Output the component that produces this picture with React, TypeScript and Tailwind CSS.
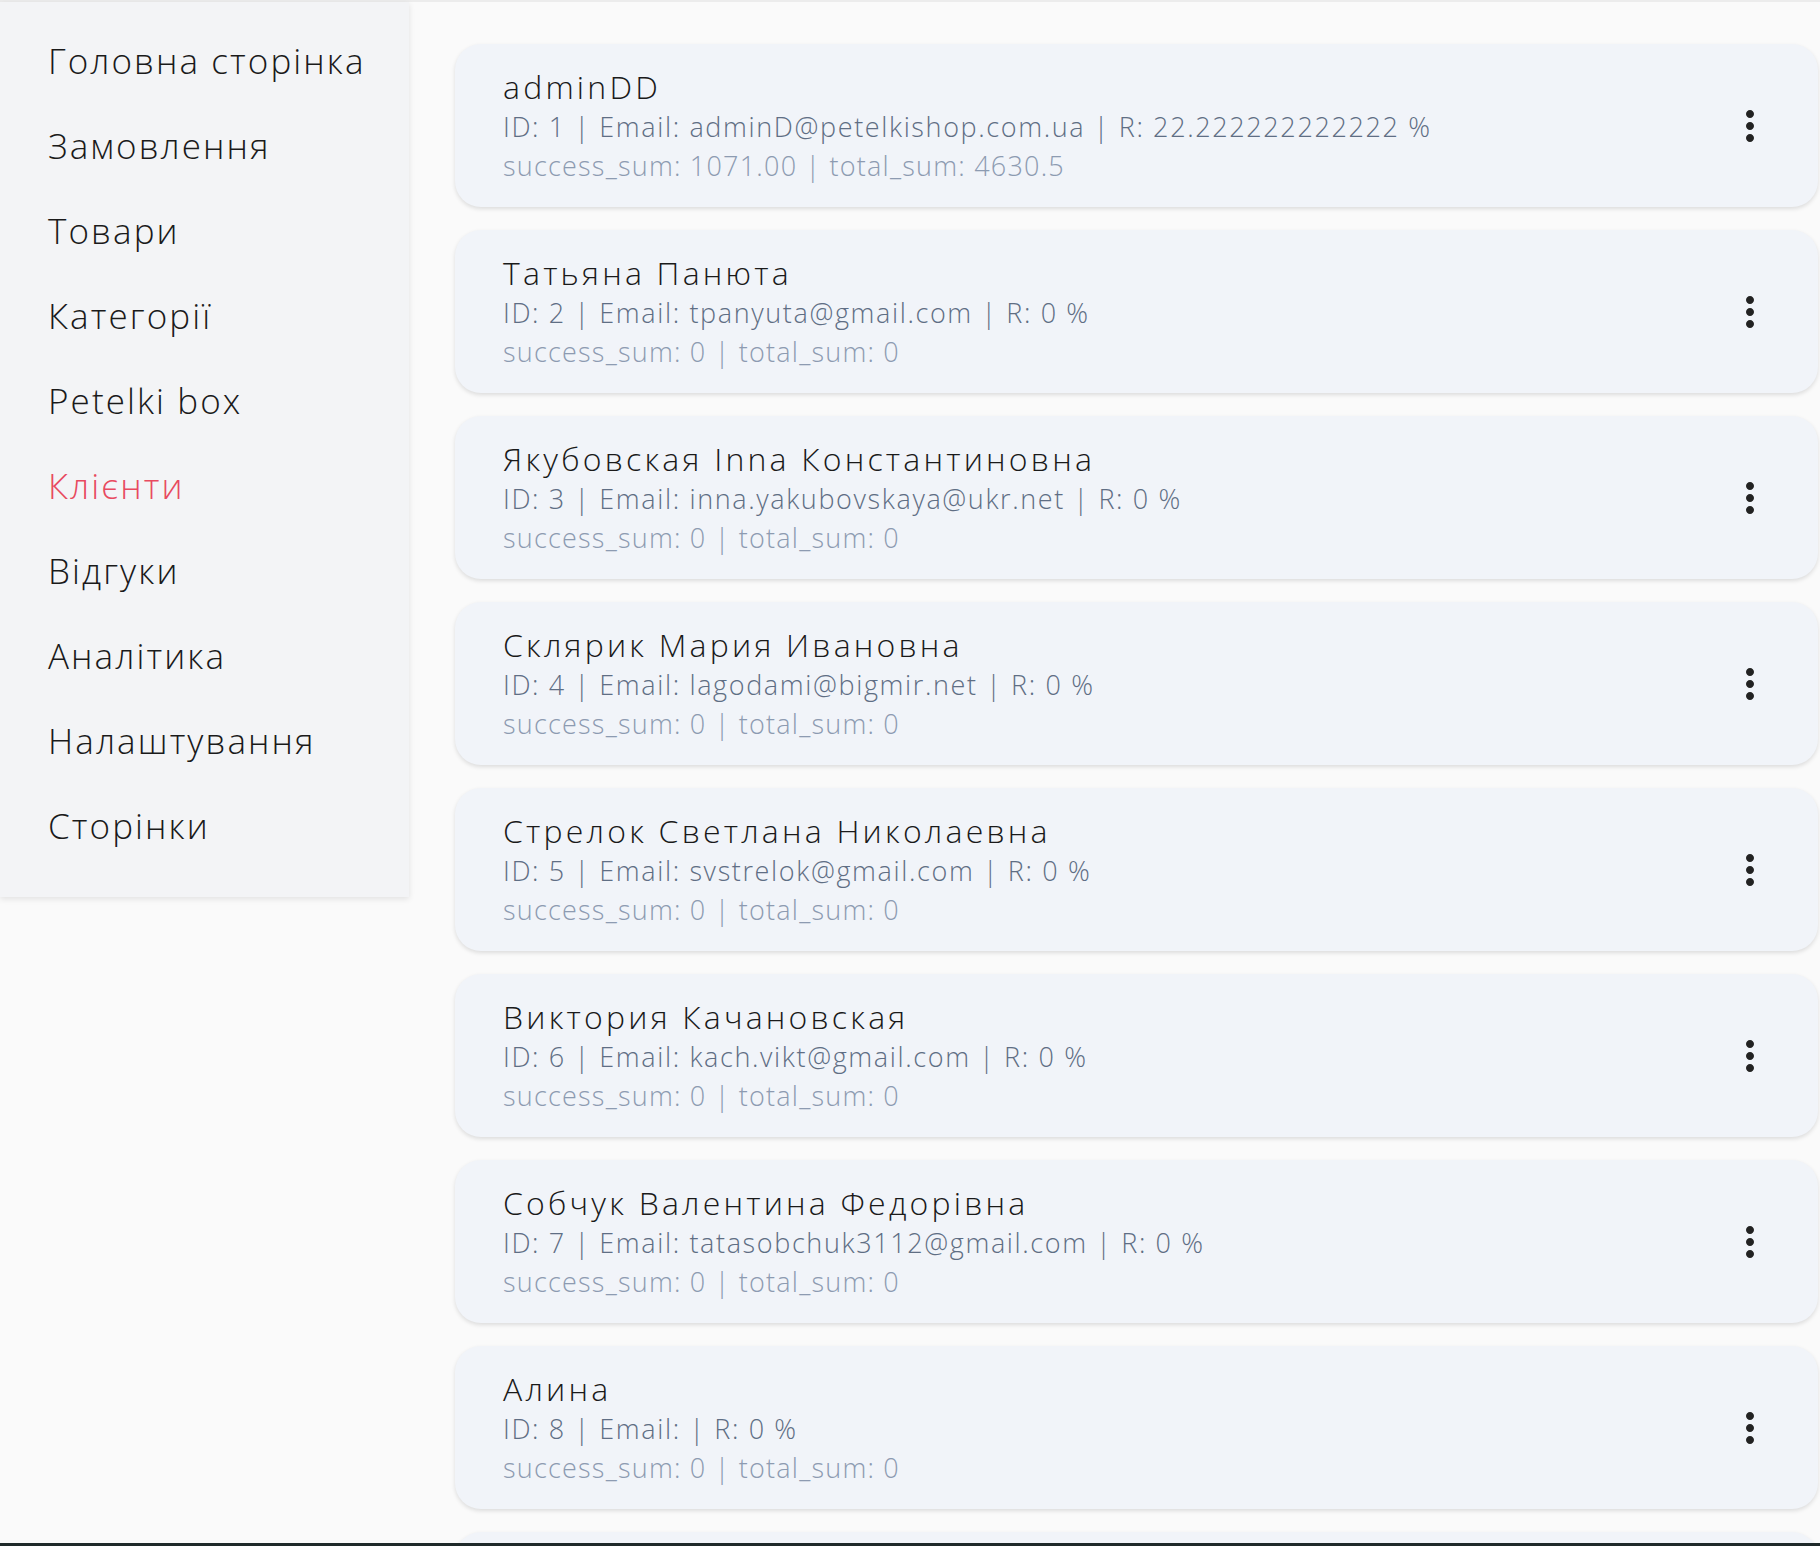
import { MdMoreVert } from "react-icons/md";

const nav = [
  "Головна сторінка",
  "Замовлення",
  "Товари",
  "Категорії",
  "Petelki box",
  "Клієнти",
  "Відгуки",
  "Аналітика",
  "Налаштування",
  "Сторінки",
];

const clients = [
  { id: 1, name: "adminDD", email: "adminD@petelkishop.com.ua", r: "22.222222222222", success: "1071.00", total: "4630.5" },
  { id: 2, name: "Татьяна Панюта", email: "tpanyuta@gmail.com", r: "0", success: "0", total: "0" },
  { id: 3, name: "Якубовская Inna Константиновна", email: "inna.yakubovskaya@ukr.net", r: "0", success: "0", total: "0" },
  { id: 4, name: "Склярик Мария Ивановна", email: "lagodami@bigmir.net", r: "0", success: "0", total: "0" },
  { id: 5, name: "Стрелок Светлана Николаевна", email: "svstrelok@gmail.com", r: "0", success: "0", total: "0" },
  { id: 6, name: "Виктория Качановская", email: "kach.vikt@gmail.com", r: "0", success: "0", total: "0" },
  { id: 7, name: "Собчук Валентина Федорівна", email: "tatasobchuk3112@gmail.com", r: "0", success: "0", total: "0" },
  { id: 8, name: "Алина", email: "", r: "0", success: "0", total: "0" },
];

function ClientCard({ c }: { c: (typeof clients)[number] }) {
  return (
    <div className="flex h-[163px] shrink-0 items-center justify-between rounded-[26px] bg-[#f1f4f9] pl-[48px] pr-[44px] shadow-[0_2px_4px_rgba(0,0,0,0.12)]">
      <div className="flex flex-col font-light">
        <p className="text-[32px] leading-[40px] tracking-[0.1em] text-[#1a1a1a]">{c.name}</p>
        <p className="text-[27px] leading-[39px] tracking-[0.06em] text-[#5f6e84]">
          ID: {c.id} | Email: {c.email} | R: {c.r} %
        </p>
        <p className="text-[27px] leading-[39px] tracking-[0.045em] text-[#8d9bb1]">
          success_sum: {c.success} | total_sum: {c.total}
        </p>
      </div>
      <MdMoreVert size={48} className="text-[#222]" />
    </div>
  );
}

export default function App() {
  return (
    <div className="flex h-[1546px] flex-col overflow-hidden bg-[#fafafa]" style={{ fontFamily: '"Open Sans", sans-serif' }}>
      <div className="flex min-h-0 flex-1 items-start border-t-2 border-[#ececec]">
        <aside className="w-[409px] shrink-0 bg-[#f3f4f6] pt-[17px] pb-[28px] shadow-[0_2px_6px_rgba(0,0,0,0.1)]">
          {nav.map((item) => (
            <div
              key={item}
              className={`flex h-[85px] items-center pl-[48px] text-[35px] font-light tracking-[0.06em] ${
                item === "Клієнти" ? "text-[#e84a5f]" : "text-[#1a1a1a]"
              }`}
            >
              {item}
            </div>
          ))}
        </aside>
        <main className="flex min-w-0 flex-1 flex-col gap-[23px] pt-[42px] pl-[46px] pr-[2px]">
          {clients.map((c) => (
            <ClientCard key={c.id} c={c} />
          ))}
          <div className="h-[163px] shrink-0 rounded-[26px] bg-[#f1f4f9] shadow-[0_2px_4px_rgba(0,0,0,0.12)]" />
        </main>
      </div>
      <div className="h-[3px] shrink-0 bg-[#1f2a2a]" />
    </div>
  );
}
